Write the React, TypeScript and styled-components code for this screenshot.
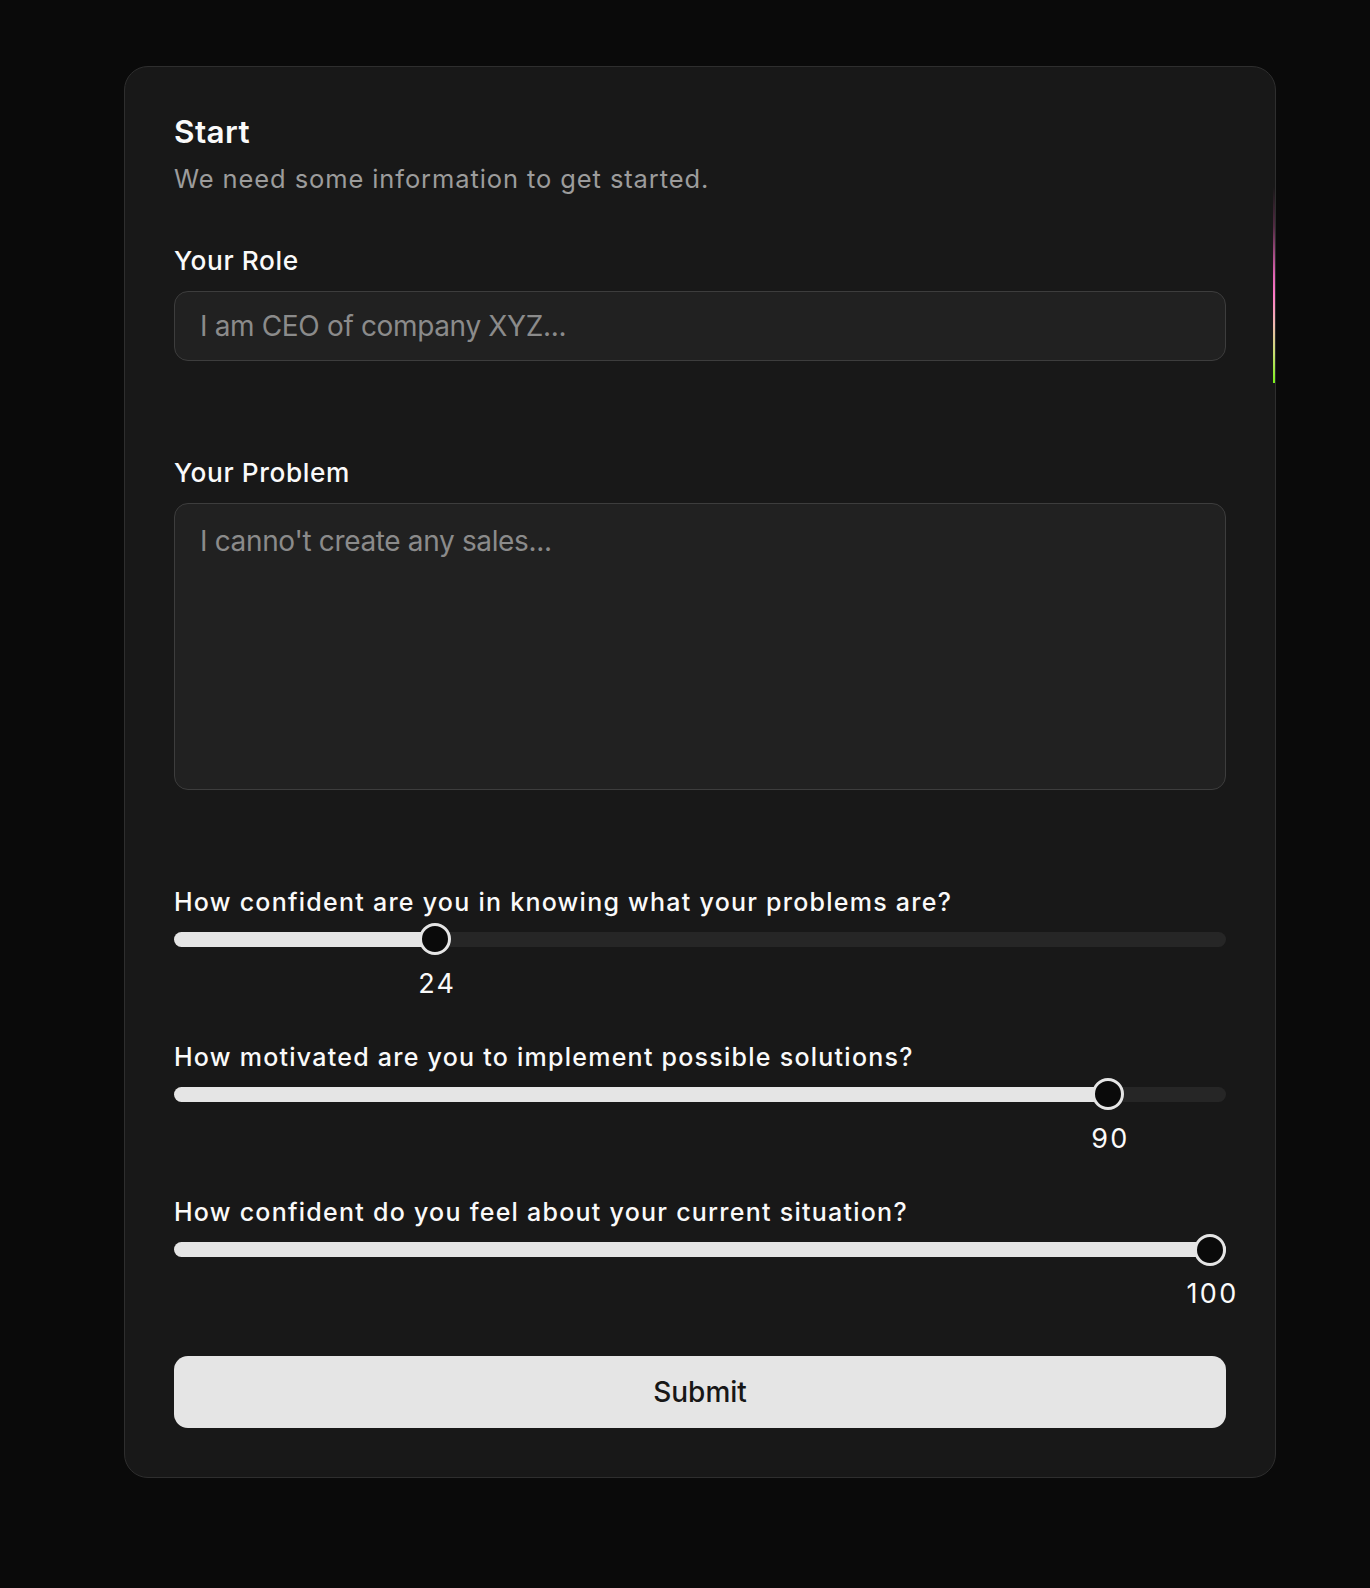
import React from "react";
import styled, { createGlobalStyle } from "styled-components";

const GlobalStyle = createGlobalStyle`
  * { box-sizing: border-box; }
  html, body { margin: 0; padding: 0; background: #0a0a0a; }
  body { font-family: Inter, "Noto Sans", "Liberation Sans", sans-serif; color: #fafafa; }
`;

const Page = styled.div`
  min-height: 1588px;
  padding: 66px 0 0 124px;
  background: #0a0a0a;
`;

const Card = styled.div`
  position: relative;
  width: 1152px;
  border: 1px solid #2e2e2e;
  border-radius: 24px;
  background: #181818;
  padding: 49px;
`;

const Beam = styled.span`
  position: absolute;
  right: 0;
  top: 120px;
  width: 2px;
  height: 196px;
  background: linear-gradient(
    to bottom,
    rgba(120, 60, 100, 0) 0%,
    rgba(140, 60, 110, 0.5) 20%,
    #e064b4 45%,
    #ff78c8 55%,
    #f0b8b0 70%,
    #c8e070 85%,
    #7cf01c 100%
  );
`;

const Header = styled.header`
  display: flex;
  flex-direction: column;
  gap: 13px;
`;

const Title = styled.h1`
  margin: 0;
  font-size: 31.5px;
  line-height: 31.5px;
  font-weight: 600;
  letter-spacing: 0.4px;
  color: #fafafa;
`;

const Subtitle = styled.p`
  margin: 0;
  font-size: 25.5px;
  line-height: 36.75px;
  font-weight: 400;
  letter-spacing: 0.9px;
  color: #9c9c9c;
`;

const Form = styled.form`
  display: flex;
  flex-direction: column;
  margin-top: 50.5px;
`;

const Field = styled.div<{ $after: number }>`
  display: flex;
  flex-direction: column;
  gap: 17.4px;
  margin-bottom: ${(p) => p.$after}px;
`;

const Label = styled.label`
  font-size: 26.25px;
  line-height: 26.25px;
  font-weight: 500;
  letter-spacing: 0.6px;
  color: #fafafa;
`;

const fieldBase = `
  width: 100%;
  border: 1px solid #3d3d3d;
  border-radius: 14px;
  background: #212121;
  color: #fafafa;
  font-family: Inter, "Noto Sans", "Liberation Sans", sans-serif;
  font-size: 28px;
  letter-spacing: -0.35px;
  outline: none;
  &::placeholder { color: #8b8b8b; opacity: 1; }
`;

const TextInput = styled.input`
  ${fieldBase}
  height: 70px;
  padding: 0 25px;
  line-height: 42px;
`;

const TextArea = styled.textarea`
  ${fieldBase}
  display: block;
  height: 286.5px;
  padding: 16px 25px;
  line-height: 42px;
  resize: none;
`;

const SliderGroup = styled.div`
  display: flex;
  flex-direction: column;
  margin-bottom: 48.6px;
`;

const Question = styled.div`
  font-size: 25px;
  line-height: 24.5px;
  font-weight: 500;
  letter-spacing: 1.25px;
  color: #fafafa;
  margin-bottom: 8.7px;
`;

const SliderRoot = styled.div`
  position: relative;
  height: 32px;
  display: flex;
  align-items: center;
`;

const Track = styled.div`
  position: relative;
  width: 100%;
  height: 15px;
  border-radius: 8px;
  background: #262626;
  overflow: hidden;
`;

const Range = styled.div`
  position: absolute;
  left: 0;
  top: 0;
  bottom: 0;
  background: #e5e5e5;
`;

const Thumb = styled.span`
  position: absolute;
  top: 0;
  width: 32px;
  height: 32px;
  border-radius: 50%;
  border: 3.5px solid #e5e5e5;
  background: #0a0a0a;
  transform: translateX(-50%);
`;

const ValueRow = styled.div`
  position: relative;
  height: 26px;
  margin-top: 15.5px;
`;

const Value = styled.span`
  position: absolute;
  top: 0;
  padding-left: 5px;
  font-size: 27px;
  line-height: 26px;
  font-weight: 400;
  letter-spacing: 2.4px;
  color: #fafafa;
  transform: translateX(-50%);
  white-space: nowrap;
`;

const SubmitButton = styled.button`
  height: 72px;
  width: 100%;
  border: none;
  border-radius: 14px;
  background: #e5e5e5;
  color: #171717;
  font-family: Inter, "Noto Sans", "Liberation Sans", sans-serif;
  font-size: 28px;
  font-weight: 500;
  cursor: pointer;
`;

type SliderProps = { question: string; value: number };

const RatingSlider: React.FC<SliderProps> = ({ question, value }) => {
  const offset = 16 - (value / 50) * 16;
  const pos = `calc(${value}% + ${offset}px)`;
  return (
    <SliderGroup>
      <Question>{question}</Question>
      <SliderRoot>
        <Track>
          <Range style={{ width: `${value}%` }} />
        </Track>
        <Thumb style={{ left: pos }} />
      </SliderRoot>
      <ValueRow>
        <Value style={{ left: pos }}>{value}</Value>
      </ValueRow>
    </SliderGroup>
  );
};

const sliders: SliderProps[] = [
  { question: "How confident are you in knowing what your problems are?", value: 24 },
  { question: "How motivated are you to implement possible solutions?", value: 90 },
  { question: "How confident do you feel about your current situation?", value: 100 },
];

export default function App() {
  return (
    <Page>
      <GlobalStyle />
      <Card>
        <Beam />
        <Header>
          <Title>Start</Title>
          <Subtitle>We need some information to get started.</Subtitle>
        </Header>
        <Form onSubmit={(e) => e.preventDefault()}>
          <Field $after={98.4}>
            <Label htmlFor="role">Your Role</Label>
            <TextInput id="role" placeholder="I am CEO of company XYZ..." />
          </Field>
          <Field $after={100}>
            <Label htmlFor="problem">Your Problem</Label>
            <TextArea id="problem" placeholder="I canno't create any sales..." />
          </Field>
          {sliders.map((s) => (
            <RatingSlider key={s.question} {...s} />
          ))}
          <SubmitButton type="submit">Submit</SubmitButton>
        </Form>
      </Card>
    </Page>
  );
}
